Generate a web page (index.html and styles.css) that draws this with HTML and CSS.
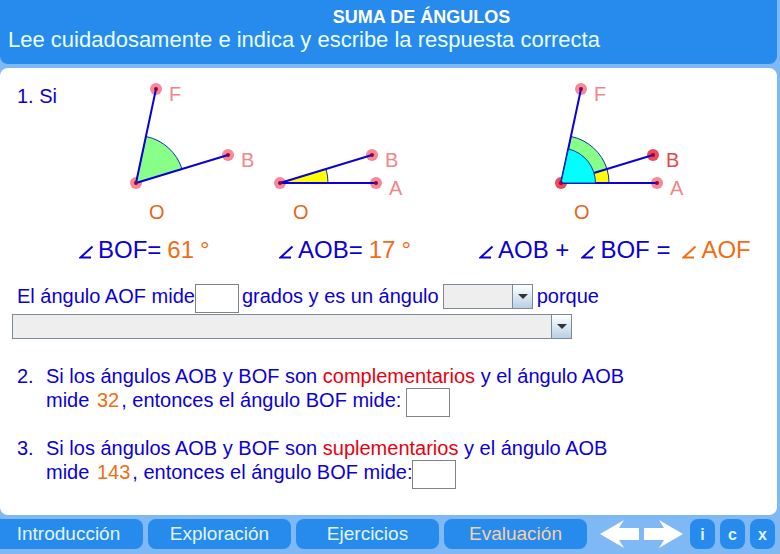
FILE: index.html
```html
<!DOCTYPE html>
<html lang="es">
<head>
<meta charset="utf-8">
<title>Suma de ángulos</title>
<link rel="stylesheet" href="styles.css">
</head>
<body>
<svg width="0" height="0" class="defs" aria-hidden="true">
  <symbol id="angle" viewBox="0 0 15 14"><path d="M13.500 1.500 1.500 12.500H12" fill="none" stroke="currentColor" stroke-width="2"/></symbol>
</svg>
<header class="banner">
  <h1>SUMA DE ÁNGULOS</h1>
  <p>Lee cuidadosamente e indica y escribe la respuesta correcta</p>
</header>
<main class="sheet">
  <section class="figures">
    <p class="lead">1. Si</p>
    <figure>
      <svg class="drawing" width="200" height="154" viewBox="78 76 200 154" role="img" aria-label="Ángulo BOF">
        <g class="halo"><circle cx="156" cy="89" r="6"/><circle cx="228" cy="155" r="6"/><circle cx="136" cy="183" r="6"/></g>
        <path class="arc green" d="M136 183 146 136.500A48 48 0 0 1 182 169Z"/>
        <path class="ray" d="M156 89 136 183 228 155"/>
        <g class="dot"><circle cx="156" cy="89" r="2"/><circle cx="228" cy="155" r="2"/><circle cx="136" cy="183" r="2"/></g>
        <text class="point" x="169" y="101">F</text>
        <text class="point" x="241" y="167">B</text>
        <text class="origin" x="149" y="219">O</text>
      </svg>
      <figcaption class="equation"><svg class="angle"><use href="#angle"/></svg>BOF=<span class="value">61</span><span class="value degree">°</span></figcaption>
    </figure>
    <figure>
      <svg class="drawing" width="200" height="154" viewBox="278 76 200 154" role="img" aria-label="Ángulo AOB">
        <g class="halo"><circle cx="372" cy="155" r="6"/><circle cx="376" cy="183" r="6"/><circle cx="280" cy="183" r="6"/></g>
        <path class="arc yellow" d="M280 183 326 169A48 48 0 0 1 328 183Z"/>
        <path class="ray" d="M372 155 280 183H376"/>
        <g class="dot"><circle cx="372" cy="155" r="2"/><circle cx="376" cy="183" r="2"/><circle cx="280" cy="183" r="2"/></g>
        <text class="point" x="385" y="167">B</text>
        <text class="point" x="389" y="195">A</text>
        <text class="origin" x="293" y="219">O</text>
      </svg>
      <figcaption class="equation"><svg class="angle"><use href="#angle"/></svg>AOB=<span class="value">17</span><span class="value degree">°</span></figcaption>
    </figure>
    <figure>
      <svg class="drawing" width="200" height="154" viewBox="478 76 200 154" role="img" aria-label="Suma de los ángulos AOB y BOF">
        <g class="halo"><circle cx="581" cy="89" r="6"/><circle cx="657" cy="183" r="6"/></g>
        <g class="halo strong"><circle cx="653" cy="155" r="6"/><circle cx="561" cy="183" r="6"/></g>
        <path class="arc green" d="M561 183 571 136.500A48 48 0 0 1 607 169Z"/>
        <path class="arc yellow" d="M561 183 607 169A48 48 0 0 1 609 183Z"/>
        <path class="ray" d="M581 89 561 183H657M561 183 653 155"/>
        <path class="arc cyan" d="M561 183 568.500 149A35 35 0 0 1 595.500 183Z"/>
        <g class="dot"><circle cx="581" cy="89" r="2"/><circle cx="657" cy="183" r="2"/><circle cx="653" cy="155" r="2"/><circle cx="561" cy="183" r="2"/></g>
        <text class="point" x="594" y="101">F</text>
        <text class="point strong" x="666" y="167">B</text>
        <text class="point" x="670" y="195">A</text>
        <text class="origin" x="574" y="219">O</text>
      </svg>
      <figcaption class="equation sum"><span><svg class="angle"><use href="#angle"/></svg>AOB +</span><span><svg class="angle"><use href="#angle"/></svg>BOF =</span><span class="result"><svg class="angle"><use href="#angle"/></svg>AOF</span></figcaption>
    </figure>
  </section>
  <section class="question fill">
    <div class="row">
      <label for="aof">El ángulo AOF mide</label><input id="aof" type="text">
      <label for="kind">grados y es un ángulo</label>
      <span class="combo kind"><select id="kind"><option></option></select></span>
      <label for="reason">porque</label>
    </div>
    <span class="combo reason"><select id="reason"><option></option></select></span>
  </section>
  <section class="question numbered">
    <span>2.</span>
    <div>
      <p>Si los ángulos AOB y BOF son <em>complementarios</em> y el ángulo AOB</p>
      <div class="row answer"><label for="q2">mide <span class="value given">32</span>, entonces el ángulo BOF mide:</label><input id="q2" type="text"></div>
    </div>
  </section>
  <section class="question numbered">
    <span>3.</span>
    <div>
      <p>Si los ángulos AOB y BOF son <em>suplementarios</em> y el ángulo AOB</p>
      <div class="row"><label for="q3">mide <span class="value given">143</span>, entonces el ángulo BOF mide:</label><input id="q3" type="text"></div>
    </div>
  </section>
</main>
<nav class="toolbar">
  <button type="button" class="tab">Introducción</button>
  <button type="button" class="tab">Exploración</button>
  <button type="button" class="tab">Ejercicios</button>
  <button type="button" class="tab current">Evaluación</button>
  <div class="arrows">
    <button type="button" class="arrow" aria-label="Anterior"><svg width="39" height="30" viewBox="0 0 39 30"><path d="M0 15 24 1 19 9H39V21H19L24 29Z"/></svg></button>
    <button type="button" class="arrow" aria-label="Siguiente"><svg width="39" height="30" viewBox="0 0 39 30"><path d="M39 15 15 1 20 9H0V21H20L15 29Z"/></svg></button>
  </div>
  <button type="button" class="small">i</button>
  <button type="button" class="small">c</button>
  <button type="button" class="small">x</button>
</nav>
</body>
</html>
```
FILE: styles.css
```css
* { box-sizing: border-box; }
body {
  margin: 0;
  min-height: 100vh;
  padding-right: 3px;
  display: flex;
  flex-direction: column;
  gap: 4px;
  background: #7eb8f5;
  font-family: "Liberation Sans", Arial, sans-serif;
}
h1, p, figure { margin: 0; }
.defs { position: absolute; }
button { border: 0; padding: 0; font-family: inherit; cursor: pointer; }

.banner {
  height: 64px;
  padding: 6px 8px;
  border-radius: 0 0 8px 8px;
  background: #268bec;
  color: #e8ffff;
}
.banner h1 { padding-left: 66px; text-align: center; font-size: 18px; line-height: 22px; color: #fff; }
.banner p { font-size: 22px; line-height: 24px; }

.sheet {
  flex: 1;
  padding: 8px 12px 0;
  border-radius: 8px;
  background: #fff;
  color: #0c00d8;
  font-size: 20px;
  line-height: 24px;
}
.figures { display: grid; grid-template-columns: 61px 200px 200px 1fr; padding-left: 5px; }
.lead { padding-top: 8px; }
.drawing { display: block; overflow: visible; }
.halo { fill: #f58a96; }
.halo.strong { fill: #ee4a55; }
.dot { fill: #900048; }
.ray { fill: none; stroke: #0c00d8; stroke-width: 2; }
.arc { stroke: #1030b0; stroke-width: 1; }
.green { fill: #88ff88; }
.yellow { fill: #ffff00; }
.cyan { fill: #00ffff; }
.point { fill: #f08888; font-size: 20px; }
.point.strong { fill: #e64848; }
.origin { fill: #e8641c; font-size: 20px; }
.equation { height: 40px; font-size: 24px; line-height: 40px; white-space: nowrap; }
.equation.sum { display: flex; gap: 11px; }
.angle { width: 15px; height: 14px; margin: 0 4px 0 1px; vertical-align: -1px; }
.value, .result { color: #f26c14; }
.equation .value { margin-left: 6px; }

.question { padding-left: 5px; margin-bottom: 23px; }
.question.fill { padding: 0; margin: 14px 0 25px; }
.row { display: flex; align-items: flex-start; height: 25px; white-space: nowrap; }
.row.answer { gap: 5px; }
.fill .row { padding-left: 5px; margin-bottom: 5px; }
.row input { width: 44px; height: 29px; border: 1px solid #808488; padding: 0 4px; background: #fff; font: inherit; }
.fill input { margin-right: 3px; }
.numbered { display: grid; grid-template-columns: 29px 1fr; }
.numbered em { font-style: normal; color: #e80010; }
.given { margin: 0 2px; }

.combo { display: block; position: relative; height: 25px; }
.combo select {
  appearance: none;
  display: block;
  width: 100%;
  height: 100%;
  border: 1px solid #7a8a99;
  border-radius: 0;
  background: #eee;
  font: inherit;
}
.combo::before {
  content: "";
  position: absolute;
  inset: 1px 1px 1px auto;
  width: 19px;
  border-left: 1px solid #7a8a99;
  background: linear-gradient(#fff, #dce8f3 50%, #b8cfe5);
  pointer-events: none;
}
.combo::after {
  content: "";
  position: absolute;
  right: 5px;
  top: 10px;
  border: 5px solid transparent;
  border-top-color: #333;
  border-bottom: 0;
  pointer-events: none;
}
.kind { width: 90px; margin: 0 4px; }
.reason { width: 560px; max-width: 100%; }

.toolbar { display: flex; gap: 5px; height: 35px; padding: 0 2px 5px 0; }
.tab, .small { border-radius: 8px; background: #268bec; color: #e0f6ff; }
.tab { flex: 1 1 142px; font-size: 19px; }
.tab:first-child { border-radius: 0 8px 8px 0; padding-right: 6px; }
.tab.current { color: #f5d0a8; }
.arrows { display: flex; gap: 5px; padding: 0 2px 0 8px; }
.arrow { background: none; }
.arrow svg { display: block; fill: #fff; }
.small { width: 25px; padding-top: 2px; font-size: 16px; font-weight: bold; }
```
